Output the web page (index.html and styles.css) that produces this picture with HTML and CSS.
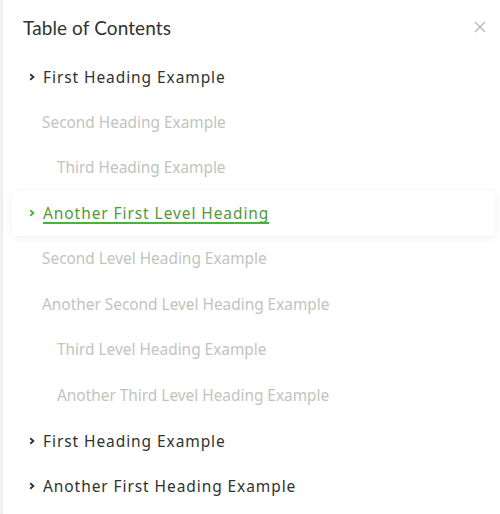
FILE: index.html
```html
<!DOCTYPE html>
<html>
<head>
<meta charset="utf-8">
<link rel="stylesheet" href="styles.css">
</head>
<body>
<div class="panel">
  <div class="header">
    <h1 class="title">Table of Contents</h1>
    <button class="close" aria-label="Close">
      <svg width="12" height="12" viewBox="0 0 12 12"><path d="M1 1L11 11M11 1L1 11" stroke="#b4b8b2" stroke-width="1.3" fill="none"/></svg>
    </button>
  </div>
  <ul class="toc">
    <li class="item l1"><svg class="chev" width="6" height="8" viewBox="0 0 6 8"><path d="M1.2 1.2L4.4 4L1.2 6.8" stroke="currentColor" stroke-width="1.8" fill="none"/></svg><a>First Heading Example</a></li>
    <li class="item l2"><a>Second Heading Example</a></li>
    <li class="item l3"><a>Third Heading Example</a></li>
    <li class="item l1 active"><svg class="chev" width="6" height="8" viewBox="0 0 6 8"><path d="M1.2 1.2L4.4 4L1.2 6.8" stroke="currentColor" stroke-width="1.8" fill="none"/></svg><a>Another First Level Heading</a></li>
    <li class="item l2"><a>Second Level Heading Example</a></li>
    <li class="item l2"><a>Another Second Level Heading Example</a></li>
    <li class="item l3"><a>Third Level Heading Example</a></li>
    <li class="item l3"><a>Another Third Level Heading Example</a></li>
    <li class="item l1"><svg class="chev" width="6" height="8" viewBox="0 0 6 8"><path d="M1.2 1.2L4.4 4L1.2 6.8" stroke="currentColor" stroke-width="1.8" fill="none"/></svg><a>First Heading Example</a></li>
    <li class="item l1"><svg class="chev" width="6" height="8" viewBox="0 0 6 8"><path d="M1.2 1.2L4.4 4L1.2 6.8" stroke="currentColor" stroke-width="1.8" fill="none"/></svg><a>Another First Heading Example</a></li>
  </ul>
</div>
</body>
</html>
```
FILE: styles.css
```css
html, body {
  margin: 0;
  padding: 0;
  background: #f3f3f3;
  font-family: Lato, "Noto Sans", sans-serif;
}
.panel {
  margin-left: 3px;
  height: 514px;
  background: #fff;
  box-shadow: -1px 0 3px rgba(0,0,0,0.04);
  overflow: hidden;
}
.header {
  display: flex;
  align-items: center;
  justify-content: space-between;
  height: 54px;
  padding: 0 12px 0 20px;
  box-sizing: border-box;
}
.title {
  margin: 0;
  font-size: 19px;
  font-weight: 400;
  color: #2f3330;
  letter-spacing: 0.1px;
}
.close {
  border: 0;
  background: none;
  padding: 0;
  width: 12px;
  height: 12px;
  margin-right: 2px;
  display: flex;
}
.toc {
  list-style: none;
  margin: 0 5px 0 9px;
  padding: 0;
  font-family: "Noto Sans", sans-serif;
}
.item {
  display: flex;
  align-items: center;
  height: 45.5px;
  box-sizing: border-box;
}
.item a {
  text-decoration: none;
  white-space: nowrap;
}
.l1 {
  padding-left: 17px;
  color: #2f3330;
}
.l1 a {
  font-size: 15.5px;
  letter-spacing: 0.92px;
  color: #2f3330;
}
.chev {
  margin-right: 8px;
  color: #2f3330;
}
.l2 {
  padding-left: 30px;
}
.l3 {
  padding-left: 45px;
}
.l2 a, .l3 a {
  font-size: 15.4px;
  color: #c1c4be;
  letter-spacing: 0;
}
.active {
  background: #fff;
  box-shadow: 0 2px 8px rgba(0,0,0,0.06);
}
.active .chev {
  color: #4fae3f;
}
.active a {
  color: #4f9a3c;
  text-decoration: underline;
  text-decoration-color: #48b33a;
  text-decoration-thickness: 2px;
  text-underline-offset: 3px;
}
```
